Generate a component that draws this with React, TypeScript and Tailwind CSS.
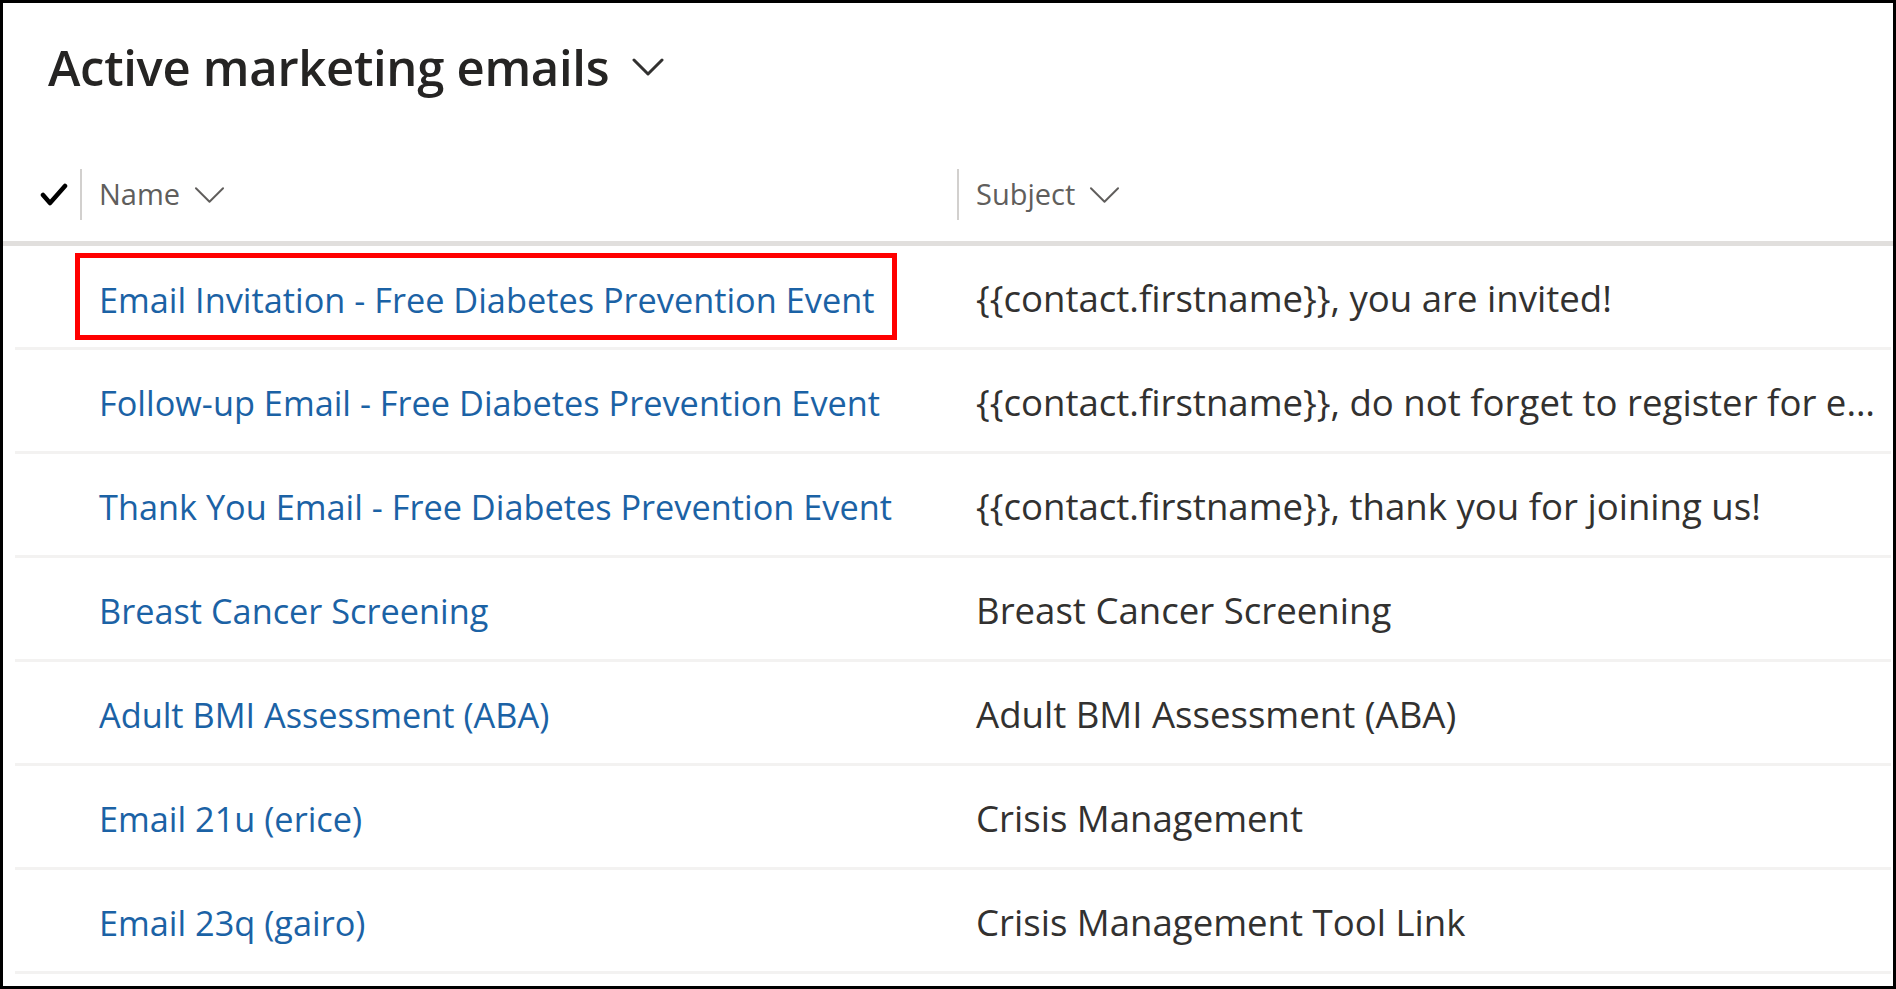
import React from "react";

type Row = { name: string; subject: string; flagged?: boolean };

const rows: Row[] = [
  { name: "Email Invitation - Free Diabetes Prevention Event", subject: "{{contact.firstname}}, you are invited!", flagged: true },
  { name: "Follow-up Email - Free Diabetes Prevention Event", subject: "{{contact.firstname}}, do not forget to register for event today!" },
  { name: "Thank You Email - Free Diabetes Prevention Event", subject: "{{contact.firstname}}, thank you for joining us!" },
  { name: "Breast Cancer Screening", subject: "Breast Cancer Screening" },
  { name: "Adult BMI Assessment (ABA)", subject: "Adult BMI Assessment (ABA)" },
  { name: "Email 21u (erice)", subject: "Crisis Management" },
  { name: "Email 23q (gairo)", subject: "Crisis Management Tool Link" },
];

const font = { fontFamily: '"Open Sans", "Noto Sans", "Liberation Sans", sans-serif' };

function Chevron({ className, stroke = 2 }: { className?: string; stroke?: number }) {
  return (
    <svg viewBox="0 0 32 20" className={className} fill="none" stroke="currentColor" strokeWidth={stroke} strokeLinecap="round" strokeLinejoin="round">
      <path d="M2 3 L16 17 L30 3" />
    </svg>
  );
}

function HeaderCell({ label }: { label: string }) {
  return (
    <div className="flex items-center h-[51px]">
      <span className="w-[2px] h-full bg-[#d2d0ce]" />
      <span className="ml-[17px] text-[29px] text-[#605e5c] leading-none pb-[2px]">{label}</span>
      <Chevron className="ml-[14px] w-[31px] h-[20px] text-[#605e5c]" stroke={2} />
    </div>
  );
}

export default function App() {
  return (
    <div className="w-[1896px] h-[989px] bg-white border-[3px] border-black overflow-hidden" style={font}>
      {/* Title */}
      <div className="flex items-center h-[130px] pl-[45px] pb-[2px]">
        <h1 className="text-[49px] font-semibold text-[#252423] tracking-[-0.3px] leading-none">Active marketing emails</h1>
        <Chevron className="ml-[23px] w-[32px] h-[20px] text-[#323130]" stroke={3} />
      </div>

      {/* Column headers */}
      <div className="flex h-[113px] pt-[36px] border-b-[5px] border-[#e1dfdd]">
        <div className="w-[77px] h-[51px] flex items-center justify-end pr-[12px]">
          <svg viewBox="0 0 28 24" className="w-[28px] h-[24px]" fill="none" stroke="#000" strokeWidth={4.5} strokeLinecap="round" strokeLinejoin="round">
            <path d="M3 12 L10 20 L25 3" />
          </svg>
        </div>
        <div className="w-[877px]">
          <HeaderCell label="Name" />
        </div>
        <div className="flex-1">
          <HeaderCell label="Subject" />
        </div>
      </div>

      {/* Rows */}
      <div className="ml-[12px] mr-[2px]">
        {rows.map((r) => (
          <div key={r.name} className="flex items-center h-[104px] border-b-[3px] border-[#f3f2f1]">
            <div className="w-[942px] pl-[84px]">
              {r.flagged ? (
                <span className="inline-block -ml-[24px] border-[5px] border-[#ff0000] pl-[19px] pr-[18px] pt-[19px] pb-[13px] leading-[45px] text-[34.3px] text-[#1b62a5] whitespace-nowrap">
                  {r.name}
                </span>
              ) : (
                <span className="inline-block pt-[4px] text-[34.3px] text-[#1b62a5] whitespace-nowrap">{r.name}</span>
              )}
            </div>
            <div className="flex-1 min-w-0 pl-[19px] pr-[14px] pt-[4px] text-[36.6px] text-[#323130] truncate">{r.subject}</div>
          </div>
        ))}
      </div>
    </div>
  );
}
